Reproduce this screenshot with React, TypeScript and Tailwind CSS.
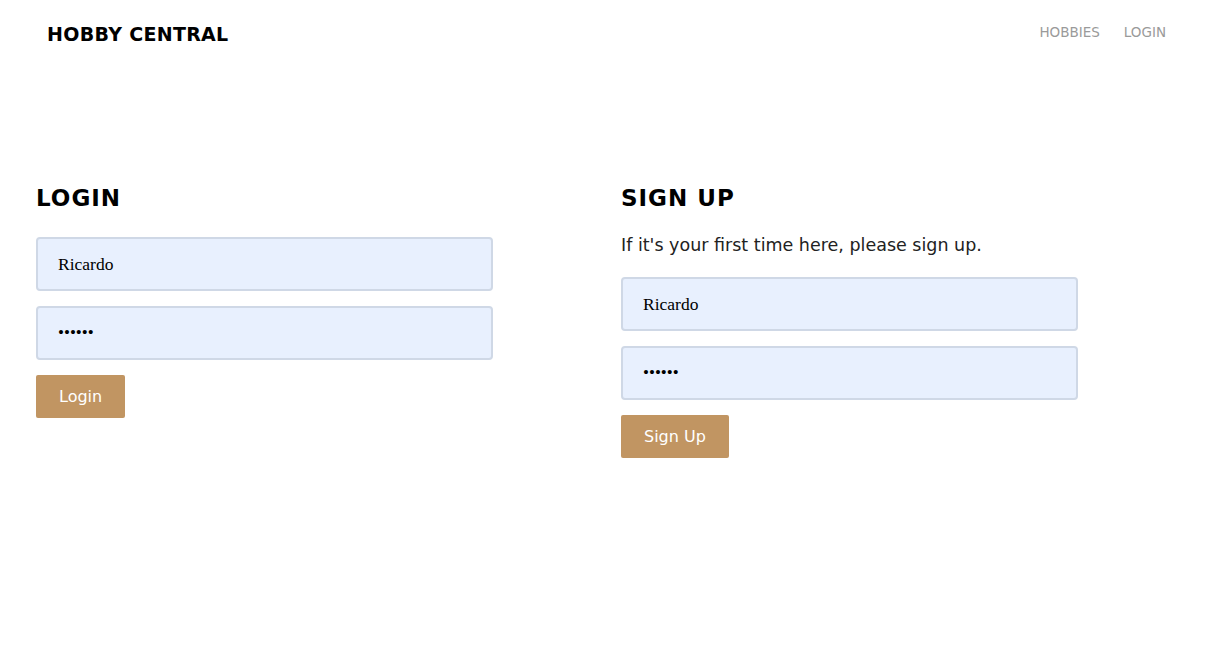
import React, { useState } from 'react';

const font = { fontFamily: '"DejaVu Sans", "Open Sans", sans-serif' };

interface FormProps {
  title: string;
  note?: string;
  button: string;
}

const AuthForm: React.FC<FormProps> = ({ title, note, button }) => {
  const [name, setName] = useState('Ricardo');
  const [pass, setPass] = useState('secret');

  return (
    <div className="w-[585px]">
      <h2 className="text-[23px] leading-[30px] font-bold tracking-[1px] text-black">{title}</h2>
      {note && <p className="mt-[20px] text-[17.5px] leading-[24px] text-[#222]">{note}</p>}
      <div className={note ? 'mt-[20px]' : 'mt-[24px]'}>
        <input
          value={name}
          onChange={(e) => setName(e.target.value)}
          className="block w-[457px] h-[54px] px-[20px] bg-[#e8f0fe] border-2 border-[#cfd8e6] rounded-[4px] text-[17.5px] text-black outline-none"
          style={{ fontFamily: '"Liberation Serif", serif' }}
        />
        <input
          type="password"
          value={pass}
          onChange={(e) => setPass(e.target.value)}
          className="block mt-[15px] w-[457px] h-[54px] px-[20px] bg-[#e8f0fe] border-2 border-[#cfd8e6] rounded-[4px] text-[17px] text-black outline-none"
          style={{ fontFamily: '"Liberation Serif", serif' }}
        />
        <button className="mt-[15px] h-[43px] px-[23px] bg-[#c19562] rounded-[2px] text-white text-[16px]">
          {button}
        </button>
      </div>
    </div>
  );
};

export default function App() {
  return (
    <div className="min-h-[659px] bg-white" style={font}>
      <nav className="flex items-center justify-between h-[68px] pl-[47px] pr-[48px]">
        <a className="text-[19px] font-bold tracking-[0.3px] text-black">HOBBY CENTRAL</a>
        <div className="flex gap-[24px] text-[13.5px] text-[#9a9a9a] -mt-[4px]">
          <a>HOBBIES</a>
          <a>LOGIN</a>
        </div>
      </nav>
      <main className="flex pl-[36px] pt-[115px]">
        <AuthForm title="LOGIN" button="Login" />
        <AuthForm title="SIGN UP" note="If it's your first time here, please sign up." button="Sign Up" />
      </main>
    </div>
  );
}
